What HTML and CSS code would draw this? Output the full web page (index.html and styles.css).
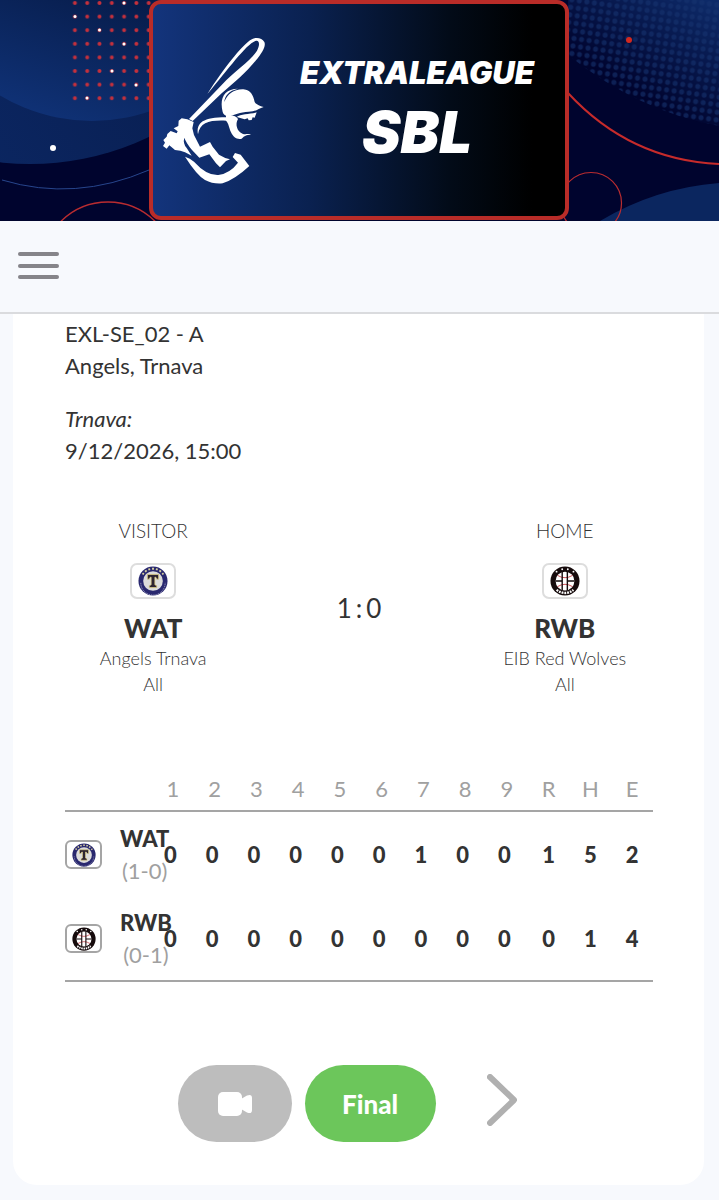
FILE: index.html
```
<!DOCTYPE html>
<html lang="en">
<head>
    <meta charset="UTF-8">
    <meta name="viewport" content="width=device-width, initial-scale=1.0">
    <title>Extraleague SBL</title>
    <link rel="stylesheet" href="styles.css">
</head>
<body>
    <header class="banner">
        <svg class="banner-bg" viewBox="0 0 719 221" preserveAspectRatio="xMidYMid slice" aria-hidden="true">
            <defs>
                <linearGradient id="disc" x1="0" y1="1" x2="1" y2="0.3">
                    <stop offset="0" stop-color="#0d2c6e"/>
                    <stop offset="1" stop-color="#06163f"/>
                </linearGradient>
                <linearGradient id="disc2" x1="0.3" y1="1" x2="0.5" y2="0.45">
                    <stop offset="0" stop-color="#103379"/>
                    <stop offset="1" stop-color="#04143a"/>
                </linearGradient>
                <linearGradient id="glow" x1="0.2" y1="1" x2="0.9" y2="0">
                    <stop offset="0.35" stop-color="#000"/>
                    <stop offset="1" stop-color="#fff"/>
                </linearGradient>
                <pattern id="red-dots" x="68.8" y="-3.8" width="12.3" height="13.6" patternUnits="userSpaceOnUse">
                    <circle cx="6.1" cy="6.8" r="2" fill="#c5303c"/>
                </pattern>
                <pattern id="halftone" width="7.6" height="7.6" patternUnits="userSpaceOnUse" patternTransform="rotate(8)">
                    <circle cx="3.8" cy="3.8" r="2.5" fill="#16336f"/>
                </pattern>
                <mask id="fade">
                    <rect x="560" width="160" height="140" fill="url(#glow)"/>
                </mask>
            </defs>
            <rect width="719" height="221" fill="#00042e"/>
            <circle cx="30" cy="-110" r="274" fill="url(#disc)"/>
            <circle cx="92" cy="-58" r="179" fill="url(#disc2)"/>
            <path d="M2 180 Q75 202 149 170" fill="none" stroke="#27458c"/>
            <rect x="69" y="-4" width="86" height="108" fill="url(#red-dots)"/>
            <g fill="#fff">
                <circle cx="124" cy="3" r="1.5"/>
                <circle cx="75" cy="16.5" r="1.5"/>
                <circle cx="99.5" cy="30" r="1.5"/>
                <circle cx="124" cy="44" r="1.5"/>
                <circle cx="112" cy="71" r="1.5"/>
                <circle cx="136" cy="85" r="1.5"/>
                <circle cx="87" cy="98" r="1.5"/>
                <circle cx="53" cy="148" r="3"/>
            </g>
            <circle cx="108" cy="269" r="67" fill="none" stroke="#b92c30" stroke-width="1.4"/>
            <path d="M568 0 H719 V126 Q640 112 568 55 Z" fill="#0d2a68" mask="url(#fade)"/>
            <path d="M568 0 H719 V126 Q640 112 568 55 Z" fill="url(#halftone)" opacity="0.6"/>
            <path d="M600 221 Q655 188 719 183 V221 Z" fill="#0b265f"/>
            <path d="M568 93 Q630 160 719 164" fill="none" stroke="#c62b2b" stroke-width="2"/>
            <circle cx="591" cy="203" r="30.5" fill="none" stroke="#b92c30" stroke-width="1.2"/>
            <circle cx="629" cy="40" r="3" fill="#d3291f"/>
        </svg>
        <div class="league">
            <svg class="batter" viewBox="0 0 390 540" fill="#fff" aria-hidden="true">
                <path d="M117 297 L215 195 C255 150 300 126 321 92 C331 74 328 58 316 63 C287 74 235 148 172 222 C225 140 272 82 300 61 C315 50 335 52 343 66 C349 78 335 100 318 121 C290 156 250 190 215 220 L128 303 Z"/>
                <path d="M218 276 C208 235 222 207 264 206 C236 212 224 228 223 246 C232 222 252 207 280 208 C302 210 310 226 314 246 C320 256 335 259 341 261 C325 266 318 275 296 275 C270 276 252 284 236 290 C226 289 220 283 218 276 Z"/>
                <path d="M260 291 C272 281 298 284 320 277 L314 293 L308 292 L305 300 L296 301 L293 295 L284 298 Z"/>
                <path d="M228 286 C248 284 260 288 264 297 C255 312 260 334 279 342 C287 345 294 340 303 344 C288 344 284 347 275 356 C262 360 250 352 243 337 C236 320 236 310 228 302 C180 300 150 306 144 343 C138 308 160 292 228 292 Z"/>
                <path d="M95 295 L112 298 L131 306 L127 325 L132 345 L150 380 L180 366 L188 380 L207 404 Q225 415 240 418 L228 423 L210 442 L198 430 L178 403 L148 413 L126 390 Q108 368 103 353 Q98 370 110 384 L125 407 L105 397 Q92 391 75 390 L58 376 L50 386 L39 378 L45 368 L40 360 L50 350 L52 342 L62 333 L80 340 L83 334 L71 325 L85 318 L86 302 Z"/>
                <path d="M105 410 Q120 414 132 425 Q170 467 205 465 Q240 460 264 428 L248 411 L255 399 L272 404 L298 438 Q255 478 218 490 Q190 493 165 480 Q140 465 105 410 Z"/>
            </svg>
            <div class="league-title">
                <span class="league-name">EXTRALEAGUE</span>
                <span class="league-short">SBL</span>
            </div>
        </div>
    </header>

    <nav class="topbar">
        <button class="menu-button" type="button" aria-label="Menu">
            <span class="menu-line"></span>
            <span class="menu-line"></span>
            <span class="menu-line"></span>
        </button>
    </nav>

    <!-- team logos -->
    <svg class="symbols" aria-hidden="true">
        <symbol id="logo-wat" viewBox="0 0 32 32">
            <circle cx="16" cy="16" r="15.5" fill="#29286f"/>
            <path d="M5 9 A13 13 0 0 1 27 9" fill="none" stroke="#d8d2a0" stroke-width="2" stroke-dasharray="2 2"/>
            <path d="M3 18 A13 13 0 0 0 29 18" fill="none" stroke="#b8b8d2" stroke-dasharray="1 1"/>
            <circle cx="16" cy="16" r="10.5" fill="#dcdcdc"/>
            <path d="M10 9 H22 V14 H20 L19 12 H18 V20 L20 21 V23 H12 V21 L14 20 V12 H13 L12 14 H10 Z" fill="#2d2431" stroke="#dfcf83" stroke-width="0.8"/>
        </symbol>
        <symbol id="logo-rwb" viewBox="0 0 32 32">
            <circle cx="16" cy="16" r="15.5" fill="#160b0c"/>
            <circle cx="16" cy="16" r="10" fill="#fff"/>
            <path d="M8 10 Q16 15 24 10 M8 22 Q16 17 24 22" fill="none" stroke="#c9454c"/>
            <path d="M13 6 V26 M18.5 6 V26 M6 16 H13 M19 16 H26" fill="none" stroke="#160b0c" stroke-width="1.5"/>
            <g fill="#fff">
                <circle cx="7" cy="6" r="1"/>
                <circle cx="13" cy="3.5" r="1"/>
                <circle cx="19" cy="3.5" r="1"/>
                <circle cx="25" cy="6" r="1"/>
            </g>
            <path d="M7 25.5 Q16 32 25 25.5" fill="none" stroke="#fff" stroke-width="2.5" stroke-dasharray="2 1"/>
        </symbol>
    </svg>

    <main class="game-card">
        <section class="game-info">
            <p>EXL-SE_02 - A<br>Angels, Trnava</p>
            <p><em>Trnava:</em><br>9/12/2026, 15:00</p>
        </section>

        <section class="matchup">
            <div class="team">
                <span class="team-side">VISITOR</span>
                <span class="team-logo"><svg class="logo"><use href="#logo-wat"/></svg></span>
                <strong class="team-code">WAT</strong>
                <span class="team-name">Angels Trnava</span>
                <span class="team-name">All</span>
            </div>
            <div class="score"><span>1</span><span>:</span><span>0</span></div>
            <div class="team">
                <span class="team-side">HOME</span>
                <span class="team-logo"><svg class="logo"><use href="#logo-rwb"/></svg></span>
                <strong class="team-code">RWB</strong>
                <span class="team-name">EIB Red Wolves</span>
                <span class="team-name">All</span>
            </div>
        </section>

        <table class="linescore">
            <thead>
                <tr>
                    <th class="col-team"></th>
                    <th>1</th><th>2</th><th>3</th><th>4</th><th>5</th><th>6</th><th>7</th><th>8</th><th>9</th>
                    <th>R</th><th>H</th><th>E</th>
                </tr>
            </thead>
            <tbody>
                <tr>
                    <td class="col-team">
                        <div class="row-team">
                            <span class="row-logo"><svg class="logo"><use href="#logo-wat"/></svg></span>
                            <div class="row-name"><strong>WAT</strong><span class="record">(1-0)</span></div>
                        </div>
                    </td>
                    <td class="inning">0</td><td class="inning">0</td><td class="inning">0</td>
                    <td class="inning">0</td><td class="inning">0</td><td class="inning">0</td>
                    <td class="inning">1</td><td class="inning">0</td><td class="inning">0</td>
                    <td>1</td><td>5</td><td>2</td>
                </tr>
                <tr>
                    <td class="col-team">
                        <div class="row-team">
                            <span class="row-logo"><svg class="logo"><use href="#logo-rwb"/></svg></span>
                            <div class="row-name"><strong>RWB</strong><span class="record">(0-1)</span></div>
                        </div>
                    </td>
                    <td class="inning">0</td><td class="inning">0</td><td class="inning">0</td>
                    <td class="inning">0</td><td class="inning">0</td><td class="inning">0</td>
                    <td class="inning">0</td><td class="inning">0</td><td class="inning">0</td>
                    <td>0</td><td>1</td><td>4</td>
                </tr>
            </tbody>
        </table>

        <div class="actions">
            <button class="pill video" type="button" aria-label="Video">
                <svg class="camera" viewBox="0 0 34 24" fill="#fff">
                    <rect width="24" height="24" rx="5"/>
                    <path d="M23 7 L29 3.5 Q34 1.5 34 6 V18 Q34 22.5 29 20.5 L23 17 Z"/>
                </svg>
            </button>
            <button class="pill final" type="button">Final</button>
            <button class="next" type="button" aria-label="Next game">
                <svg class="chevron" viewBox="0 0 30 52" fill="none" stroke="#b0b0b0" stroke-width="6" stroke-linecap="round" stroke-linejoin="round">
                    <path d="M3 3 L27 26 L3 49"/>
                </svg>
            </button>
        </div>
    </main>
</body>
</html>
```
FILE: styles.css
```
* {
    box-sizing: border-box;
}
body {
    margin: 0;
    font-family: Lato, "Liberation Sans", sans-serif;
    font-size: 22px;
    line-height: 32px;
    color: #333;
    background-color: #f7f9fd;
}
button {
    padding: 0;
    border: none;
    background: none;
    font-family: inherit;
    cursor: pointer;
}

/* banner */
.banner {
    position: relative;
    display: flex;
    justify-content: center;
    padding: 0 2px 1px 0;
    overflow: hidden;
    background-color: #00042e;
}
.banner-bg {
    position: absolute;
    top: 0;
    left: 0;
    width: 100%;
    height: 100%;
}
.league {
    position: relative;
    display: flex;
    align-items: flex-start;
    width: 420px;
    padding: 16px 0;
    border: 4px solid #b92c28;
    border-radius: 12px;
    background: linear-gradient(to right, #13347c, #0a2150 38%, #020b18 72%, #000 92%);
}
.batter {
    width: 130px;
    height: 180px;
    flex-shrink: 0;
    margin-left: -3px;
}
.league-title {
    flex: 1;
    display: flex;
    flex-direction: column;
    align-items: center;
    padding: 34px 10px 0 0;
    font-family: Inter, "Open Sans", sans-serif;
    font-weight: 900;
    font-style: italic;
    color: white;
}
.league-name {
    font-size: 31px;
    line-height: 38px;
}
.league-short {
    font-size: 58px;
    line-height: 80px;
}

/* menu bar */
.topbar {
    display: flex;
    padding: 31px 18px 33px;
    border-bottom: 2px solid #dadbde;
}
.menu-button {
    display: flex;
    flex-direction: column;
    justify-content: space-between;
    width: 41px;
    height: 27px;
}
.menu-line {
    width: 100%;
    height: 4px;
    border-radius: 2px;
    background-color: #858489;
}

.symbols {
    display: none;
}

/* game card */
.game-card {
    margin: 0 15px 15px 13px;
    padding: 4px 51px 43px 52px;
    border-radius: 0 0 24px 24px;
    background-color: white;
}
.game-info p {
    margin: 0 0 21px;
}
.matchup {
    display: grid;
    grid-template-columns: 3fr 4fr 3fr;
    align-items: center;
    margin-top: 51px;
    text-align: center;
}
.team {
    display: flex;
    flex-direction: column;
    align-items: center;
}
.team-side,
.team-name {
    font-size: 18px;
    line-height: 26px;
    font-weight: 300;
}
.team-side {
    font-size: 19px;
}
.team-logo {
    display: flex;
    justify-content: center;
    align-items: center;
    width: 46px;
    height: 36px;
    margin: 19px 0 12px;
    border: 2px solid #ddd;
    border-radius: 7px;
}
.team-logo .logo {
    width: 30px;
    height: 30px;
}
.team-code {
    font-size: 26px;
    line-height: 34px;
    font-weight: 900;
}
.score {
    display: flex;
    justify-content: center;
    gap: 4px;
    font-size: 26px;
}

/* line score */
.linescore {
    width: 100%;
    margin-top: 74px;
    table-layout: fixed;
    border-collapse: separate;
    border-spacing: 0;
}
.linescore th,
.linescore td {
    padding: 0;
    text-align: center;
}
.linescore th {
    height: 41px;
    padding-bottom: 4px;
    border-bottom: 2px solid #a5a5a5;
    font-weight: 400;
    color: #a0a0a0;
}
.linescore td {
    height: 85px;
    font-weight: 900;
}
.linescore tbody tr:last-child td {
    border-bottom: 2px solid #a5a5a5;
}
.linescore .col-team {
    width: 87px;
}
.linescore .inning {
    padding-right: 5px;
}
.row-team {
    display: flex;
    align-items: center;
    gap: 18px;
}
.row-logo {
    display: flex;
    justify-content: center;
    align-items: center;
    flex-shrink: 0;
    width: 37px;
    height: 29px;
    border: 2px solid #a5a5a5;
    border-radius: 6px;
}
.row-logo .logo {
    width: 24px;
    height: 24px;
}
.row-name {
    display: flex;
    flex-direction: column;
    align-items: center;
}
.row-name strong {
    font-weight: 900;
}
.record {
    font-weight: 400;
    color: #a0a0a0;
}

/* buttons */
.actions {
    display: flex;
    justify-content: center;
    align-items: center;
    gap: 13px;
    margin-top: 83px;
}
.pill {
    height: 77px;
    border-radius: 39px;
    color: white;
}
.video {
    display: flex;
    justify-content: center;
    align-items: center;
    width: 114px;
    background-color: #bdbdbd;
}
.camera {
    width: 34px;
    height: 24px;
}
.final {
    width: 131px;
    background-color: #6cc65b;
    font-size: 26px;
    font-weight: 900;
}
.next {
    display: flex;
    width: 54px;
    margin-left: 38px;
    padding-bottom: 8px;
}
.chevron {
    width: 30px;
    height: 52px;
}
```
